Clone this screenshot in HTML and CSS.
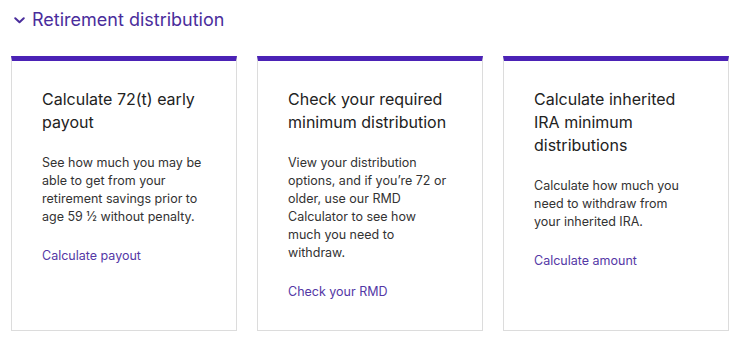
FILE: index.html
```html
<!DOCTYPE html>
<html lang="en">
<head>
    <meta charset="UTF-8">
    <title>Retirement distribution</title>
    <meta name="viewport" content="width=device-width, initial-scale=1.0">
    <link rel="stylesheet" href="styles.css">
</head>
<body>
    <section class="section">
        <h2 class="section-title">
            <svg class="chevron" width="11" height="7" viewBox="0 0 11 7" aria-hidden="true">
                <path d="M1.25 1.25 L5.5 5.25 L9.75 1.25" fill="none" stroke="currentColor" stroke-width="2" stroke-linecap="round" stroke-linejoin="round"/>
            </svg>
            Retirement distribution
        </h2>
        <div class="cards">
            <div class="card">
                <h3>Calculate 72(t) early payout</h3>
                <p>See how much you may be able to get from your retirement savings prior to age 59 &frac12; without penalty.</p>
                <a href="#">Calculate payout</a>
            </div>
            <div class="card">
                <h3>Check your required minimum distribution</h3>
                <p>View your distribution options, and if you&rsquo;re 72 or older, use our RMD Calculator to see how much you need to withdraw.</p>
                <a href="#">Check your RMD</a>
            </div>
            <div class="card">
                <h3>Calculate inherited IRA minimum distributions</h3>
                <p>Calculate how much you need to withdraw from your inherited IRA.</p>
                <a href="#">Calculate amount</a>
            </div>
        </div>
    </section>
</body>
</html>
```

FILE: styles.css
```css
body {
    background: #fff;
    color: #333;
    font-family: Inter, "Noto Sans", sans-serif;
    margin: 0;
    padding: 0;
}
.section {
    padding: 8px 12px 0 11px;
}
.section-title {
    display: flex;
    align-items: center;
    gap: 7px;
    margin: 0 0 24px 0;
    padding-left: 3px;
    font-size: 18px;
    line-height: 24px;
    font-weight: 400;
    color: #4a2d9c;
}
.chevron {
    margin-top: 1px;
}
.cards {
    display: grid;
    grid-template-columns: repeat(3, 226px);
    gap: 20px;
}
.card {
    border: 1px solid #dcdcdc;
    border-top: 5px solid #4b22b6;
    padding: 27px 33px 30px 30px;
    height: 275px;
    box-sizing: border-box;
}
.card h3 {
    margin: 0 0 20px 0;
    font-size: 16px;
    line-height: 23px;
    font-weight: 400;
    color: #222;
}
.card p {
    margin: 0 0 18px 0;
    font-size: 12.5px;
    line-height: 18px;
    color: #333;
}
.card a {
    font-size: 12.5px;
    line-height: 18px;
    color: #5438a6;
    text-decoration: none;
}
```
